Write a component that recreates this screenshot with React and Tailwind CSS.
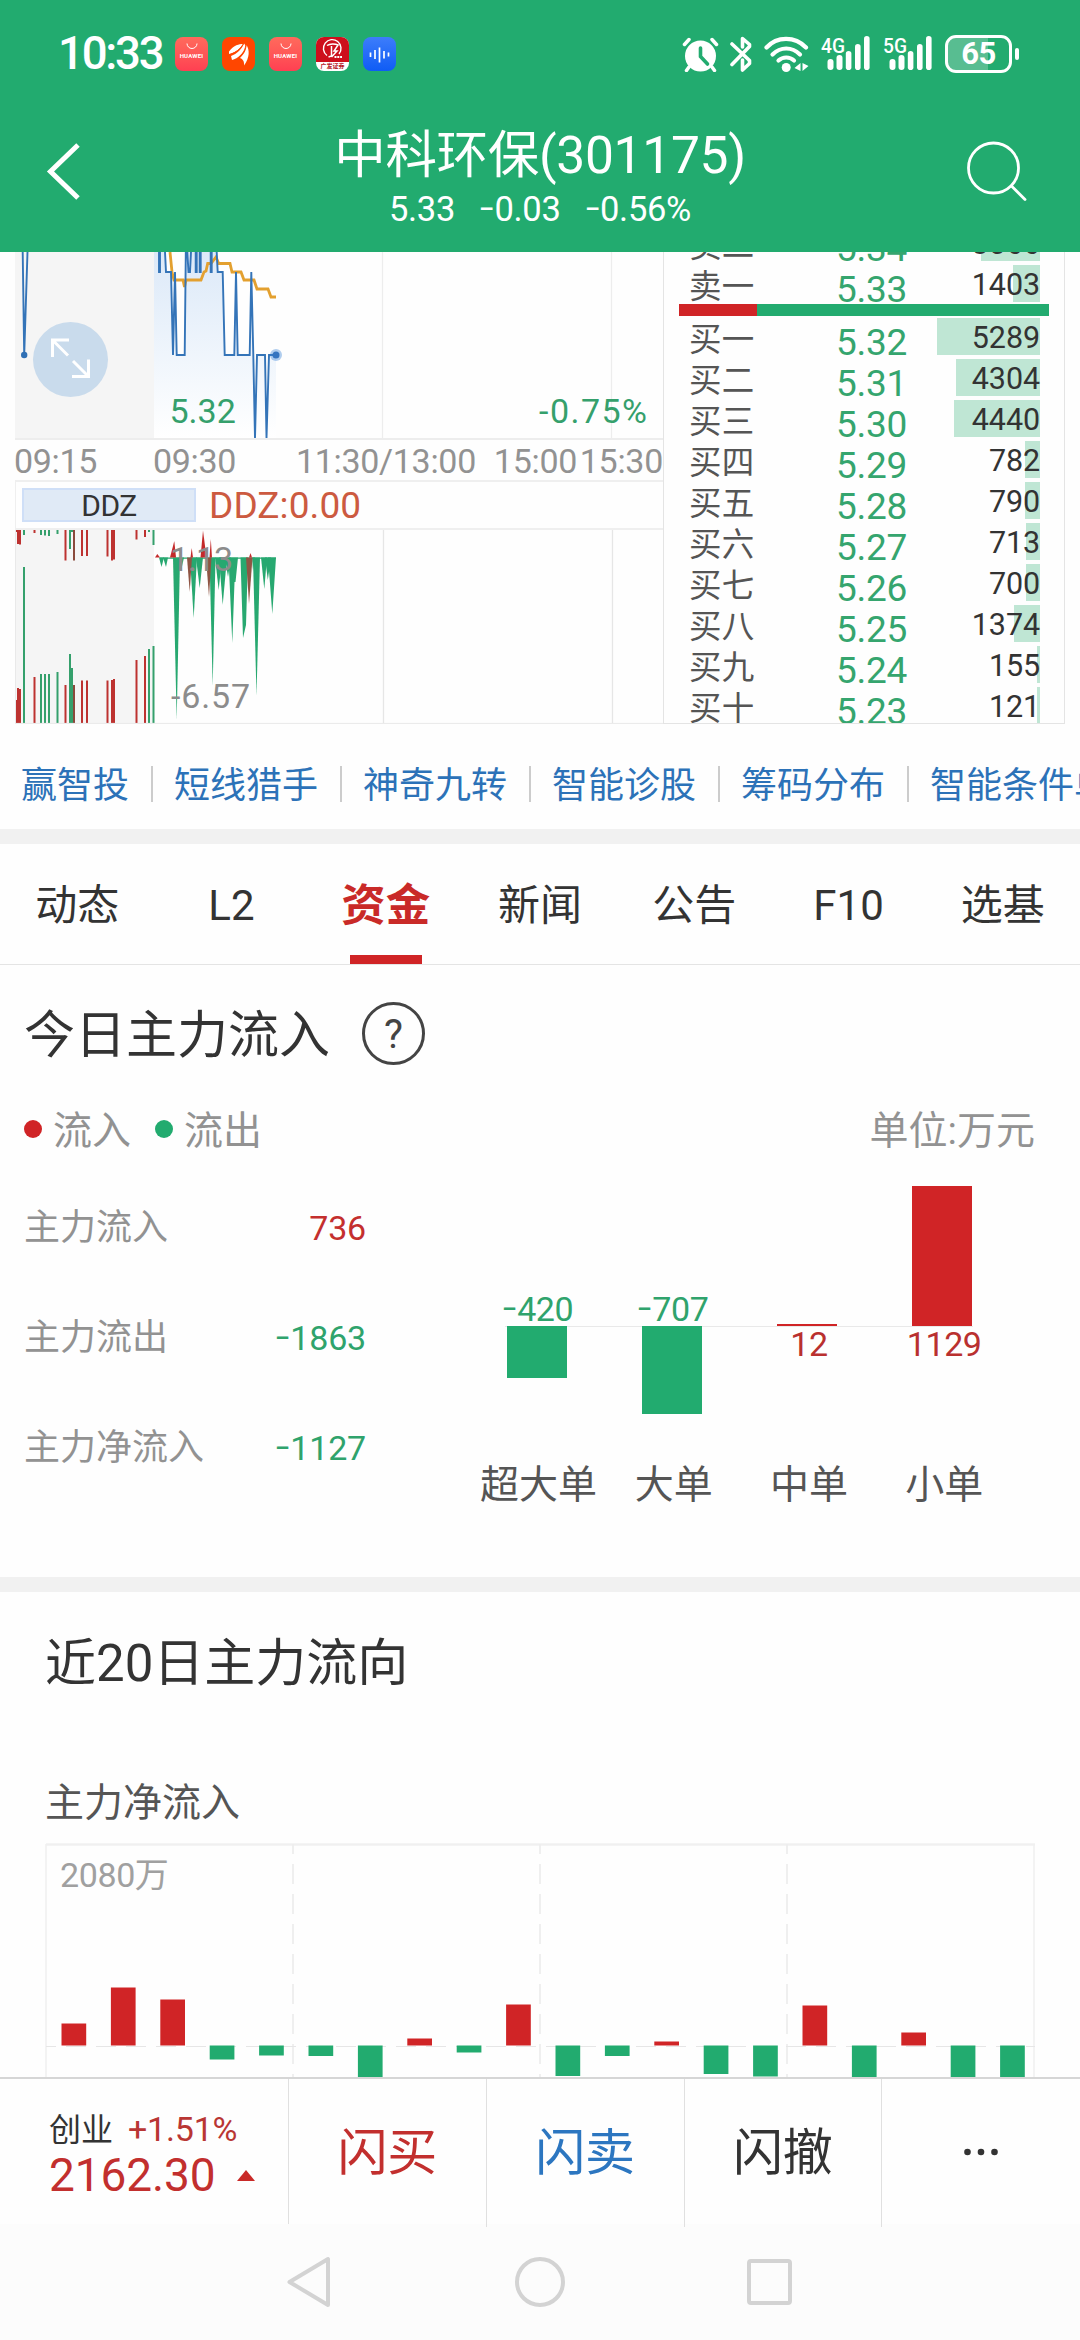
import React from 'react';

const LEVELS = [
  { label: '卖一', price: '5.33', volume: '1403', bar: 27 },
  { label: '买一', price: '5.32', volume: '5289', bar: 103 },
  { label: '买二', price: '5.31', volume: '4304', bar: 84 },
  { label: '买三', price: '5.30', volume: '4440', bar: 86 },
  { label: '买四', price: '5.29', volume: '782', bar: 15 },
  { label: '买五', price: '5.28', volume: '790', bar: 15 },
  { label: '买六', price: '5.27', volume: '713', bar: 14 },
  { label: '买七', price: '5.26', volume: '700', bar: 14 },
  { label: '买八', price: '5.25', volume: '1374', bar: 26 },
  { label: '买九', price: '5.24', volume: '155', bar: 3 },
  { label: '买十', price: '5.23', volume: '121', bar: 3 },
];

const TOOLS = ['赢智投', '短线猎手', '神奇九转', '智能诊股', '筹码分布', '智能条件单'];
const TABS = ['动态', 'L2', '资金', '新闻', '公告', 'F10', '选基'];

const SUMMARY = [
  { label: '主力流入', value: '736', color: 'text-[#c42f2e]' },
  { label: '主力流出', value: '-1863', color: 'text-[#2fa36c]' },
  { label: '主力净流入', value: '-1127', color: 'text-[#2fa36c]' },
];

const ORDERS = [
  { label: '超大单', value: -420, height: 52 },
  { label: '大单', value: -707, height: 88 },
  { label: '中单', value: 12, height: 2 },
  { label: '小单', value: 1129, height: 140 },
];

// bar heights in px, positive grows upwards
const FLOW = [22, 58, 46, -14, -10, -10.5, -40, 7, -7, 41, -30.5, -10.5, 4, -28.5, -31, 40, -40, 13, -40, -40];

// call auction bars: [x, y, color]
const R = '#bd3230';
const G = '#35a06c';
const B = '#8a4a3c';
const AUCTION_TOP = [
  [16, 532, R], [18, 544, R], [20, 544.5, R], [24, 535, G], [34.5, 533, R], [41, 535, G], [45, 535.5, G],
  [49, 536, G], [57.5, 534, G], [65.5, 560.5, R], [72, 532, G], [70, 549, G], [74, 560.5, B], [82, 556, R],
  [87, 556, R], [107.5, 556.5, R], [112, 560.5, R], [114, 559.5, R], [136.5, 539.5, R], [145, 537, R],
  [149, 532, G], [153.5, 545, G],
];
const AUCTION_BOTTOM = [
  [16, 700, R], [18, 688, R], [20, 689, R], [24, 567, G], [34.5, 677, R], [41, 674, G], [45, 674, G],
  [49, 674, G], [57.5, 672, G], [65.5, 685, R], [74, 685, B], [72, 668, G], [70, 654, G], [82, 680.5, R],
  [87, 680.5, R], [107.5, 680.5, R], [112, 680, R], [114, 679, R], [136.5, 660, R], [145, 656, R],
  [149, 649, G], [153.5, 646, G],
];

// spikes around the zero line: [left, right, tip x, tip y]
const SPIKES_GREEN = [
  [159, 164, 161.5, 567], [163, 168, 166, 567], [173, 180, 176.7, 720], [179, 184, 181, 571],
  [190, 197, 193.7, 618], [196, 203, 199.7, 588], [209.5, 215.5, 212.7, 686], [215, 222, 218.7, 590],
  [219, 227, 222.7, 605], [225, 231, 228, 577], [261, 267, 264.3, 589], [265, 271, 267.8, 580],
  [252, 255, 253, 571], [253, 260, 256.5, 696],
];
const SPIKES_RED = [
  [155, 160, 157.3, 554], [170, 176, 174.3, 541], [190.5, 193, 191.7, 548], [200.5, 206.5, 203, 530.5],
  [209.5, 212, 210.8, 539], [249, 252, 250.5, 553],
];
const SPIKES_BROWN = [
  [187, 192, 189.7, 592], [206, 211.5, 209, 597], [246, 252.5, 249, 604],
];

const PRICE_LINE =
  'M159 252V272H160V252M165 252L166 272H171L173 355L175 272L176.7 355H184.7L185.8 252M187.3 252L188.5 272H190L191 252' +
  'M195.7 252V272H196.7V252M199.7 252V272H200.7V252M210.7 252V272H211.7V252M216.7 252L217.7 272H222.7L224.7 355H234.3' +
  'L236 272L237.7 355H249.7L251.3 272L253.3 355L255 438L257 355H265L266.5 438L269 355H276';

function Num({ children }) {
  const text = String(children);
  if (!text.startsWith('-')) return <span>{text}</span>;
  return (
    <span>
      <span className="inline-block w-[0.42em] -translate-y-[0.05em] scale-x-[1.4] origin-left">-</span>
      {text.slice(1)}
    </span>
  );
}

function Signal({ label }) {
  return (
    <svg width="52" height="36" viewBox="0 0 52 36" fill="#fff" className="overflow-visible">
      <text x="1" y="17.500" fontSize="21" fontWeight="500" fontFamily="Roboto, sans-serif" textLength="24" lengthAdjust="spacingAndGlyphs">{label}</text>
      <rect x="7.5" y="24" width="6" height="11" rx="3" />
      <rect x="16.5" y="20" width="6" height="15" rx="3" />
      <rect x="25.8" y="16" width="5.6" height="19" rx="2.8" />
      <rect x="35" y="9" width="5.6" height="26" rx="2.8" />
      <rect x="44" y="1" width="5.6" height="34" rx="2.8" />
    </svg>
  );
}

function HuaweiIcon() {
  return (
    <div className="w-[33px] h-[34px] rounded-[8px] bg-linear-to-b from-[#ff6a5c] to-[#ff3f52] flex flex-col items-center">
      <svg width="12" height="7" viewBox="0 0 12 7" className="mt-[6px]" fill="none" stroke="#fff" strokeWidth="1">
        <path d="M1 0.5A5 5 0 0 0 11 0.5" />
      </svg>
      <span className="mt-[2px] text-[6px] leading-[8px] font-bold text-white tracking-[0.2px]">HUAWEI</span>
    </div>
  );
}

function StatusBar() {
  return (
    <div className="h-[108px] pl-[58px] pr-[61px] flex items-start justify-between text-white">
      <div className="flex items-start">
        <span className="mt-[28px] w-[117px] text-[45.500px] leading-[52px] font-medium tracking-[-2.200px]">10:33</span>
        <div className="mt-[37px] flex gap-[14px]">
          <HuaweiIcon />
          <svg width="33" height="34" viewBox="0 0 33 34">
            <rect width="33" height="34" rx="8" fill="#ff4600" />
            <path d="M7 14.5C12 8 17 7 21 7C19 11 14 15.5 7 17Z" fill="#fff" />
            <path d="M9 19C15 17 20 12 22 6.5L24 9C22 16 16 21.5 10 23Z" fill="#fff" />
            <path d="M18 21C22 17 24.5 13 24.5 8C27.5 13 28 20 22 28.500C22.500 25 21 22 18 21Z" fill="#fff" />
            <path d="M7.500 17.800C14 15.500 18.500 12 21.500 6.800M15 22C20 18.500 23 14 23.900 8" fill="none" stroke="#ff4600" strokeWidth="1" />
          </svg>
          <HuaweiIcon />
          <div className="w-[33px] h-[34px] rounded-[8px] bg-white overflow-hidden flex flex-col items-center">
            <svg width="33" height="25" viewBox="0 0 33 25" className="shrink-0">
              <rect width="33" height="25" fill="#cd0f1c" />
              <path d="M11 18.500A8.800 8.800 0 1 1 23 17" fill="none" stroke="#fff" strokeWidth="1.400" />
              <path d="M11 8.500C14 6.500 19 6.500 22 8L18 14H21L15.500 20M15.500 9V19L12.500 20" fill="none" stroke="#fff" strokeWidth="1.500" />
              <path d="M18.500 20H26" stroke="#fff" strokeWidth="2" strokeDasharray="2 .8" />
            </svg>
            <span className="text-[6px] leading-[8px] font-bold text-[#b5202a] whitespace-nowrap">广发证券</span>
          </div>
          <svg width="33" height="34" viewBox="0 0 33 34">
            <defs>
              <linearGradient id="voice" x1="0" y1="0" x2="0" y2="1">
                <stop offset="0" stopColor="#3d7dfb" />
                <stop offset="1" stopColor="#0f5cf5" />
              </linearGradient>
            </defs>
            <rect width="33" height="34" rx="8" fill="url(#voice)" />
            <path d="M7.500 15.500V20M12 13V22M16.500 10.500V25.500M21 14V21.500M25.500 15.500V19.500" stroke="#fff" strokeWidth="1.700" fill="none" />
          </svg>
        </div>
      </div>

      <div className="mt-[35px] flex items-start">
        <svg width="37" height="37" viewBox="0 0 37 37" className="mr-[11px]">
          <circle cx="18.500" cy="21" r="15.500" fill="#fff" />
          <path d="M7 32L4.500 35.500M30 32L32.500 35.500M2.500 9.500L7 4.500M34.500 9.500L30 4.500" stroke="#fff" strokeWidth="3.500" strokeLinecap="round" />
          <path d="M18.500 13V21.500L25.500 29" fill="none" stroke="#22ab6f" strokeWidth="3.600" strokeLinecap="round" />
        </svg>
        <svg width="22" height="37" viewBox="0 0 22 37" className="mr-[12px]" fill="none" stroke="#fff" strokeWidth="3.600" strokeLinejoin="round" strokeLinecap="round">
          <path d="M2 9L19.500 25.500V28.500L12.500 35V25M12.500 12V3.500L19.500 9.500V11.500L2 29.500" />
        </svg>
        <svg width="45" height="37" viewBox="0 0 45 37" className="mr-[11px]">
          <g fill="none" stroke="#fff" strokeWidth="4.200" strokeLinecap="round">
            <path d="M2.500 12.500C13 1 31 1 42 12.500" />
            <path d="M8.500 19.500C16.500 11.500 28 11.500 36 19.500" />
            <path d="M14.500 25.500C19 21.500 25.500 21.500 30 25.500" />
          </g>
          <circle cx="22.200" cy="32.500" r="4.500" fill="#fff" />
          <path d="M36.500 28V36L30.500 33Z M38.500 28V36L44.500 31Z" fill="#fff" />
        </svg>
        <Signal label="4G" />
        <div className="w-[10px]" />
        <Signal label="5G" />
        <div className="ml-[11px] w-[67px] h-[38px] rounded-[11px] border-[3px] border-white bg-linear-to-r from-[#58bd91] from-66% to-transparent to-66% flex items-center justify-center">
          <span className="text-[31px] leading-[32px] font-bold tracking-[-0.5px]">65</span>
        </div>
        <div className="ml-[3px] mt-[13px] w-[4px] h-[12px] rounded-[2px] bg-white" />
      </div>
    </div>
  );
}

function Header() {
  return (
    <div className="h-[144px] flex justify-between text-white">
      <svg width="120" height="144" viewBox="0 0 120 144" fill="none" stroke="#fff" strokeWidth="5">
        <path d="M78 37L50.500 63.500L78 90" />
      </svg>
      <div className="flex flex-col items-center">
        <h1 className="mt-[17px] text-[51.500px] leading-[62px] tracking-[-0.3px]">中科环保(301175)</h1>
        <div className="mt-[2px] flex gap-[25px] text-[34.500px] leading-[40px] tracking-[-0.3px]">
          <Num>5.33</Num>
          <Num>-0.03</Num>
          <Num>-0.56%</Num>
        </div>
      </div>
      <svg width="120" height="144" viewBox="0 0 120 144" fill="none" stroke="#fff" strokeWidth="2.800" strokeLinecap="round">
        <circle cx="33.500" cy="60" r="25" />
        <path d="M51.500 78L65 91.500" />
      </svg>
    </div>
  );
}

function PriceChart() {
  return (
    <svg width="649" height="188" viewBox="15 252 649 188" className="block">
      <defs>
        <linearGradient id="area" x1="0" y1="0" x2="0" y2="1">
          <stop offset="0" stopColor="#dce9f8" />
          <stop offset="1" stopColor="#fff" />
        </linearGradient>
      </defs>
      <rect x="15" y="252" width="139" height="186" fill="#f5f5f5" />
      <path
        d="M154 438V252H165L166 272H171L173 355L175 272L176.700 355H184.700L185.800 252H216.700L217.700 272H222.700L224.700 355H234.300L236 272L237.700 355H249.700L251.300 272L253.300 355L255 438L257 355H265L266.500 438L269 355H276V438Z"
        fill="url(#area)"
      />
      <path d="M15 439H664" stroke="#ededed" strokeWidth="2" />
      <path d="M382.500 252V438M611.500 252V438" stroke="#ededed" strokeWidth="1.300" />
      <path
        d="M170 252L172 272L174 280H183L184.500 287L186 280H201L204 272L206 271L207.700 263.500H211L216 257L218.700 263.500H230L232 272H241L244 280H254L257 289H268L271 297H276"
        fill="none"
        stroke="#e3a02f"
        strokeWidth="2.800"
      />
      <path d="M22.700 252L24.200 355L27.500 252" fill="none" stroke="#3474b8" strokeWidth="1.900" />
      <circle cx="24.200" cy="355" r="3.200" fill="#2f70b5" />
      <path d={PRICE_LINE} fill="none" stroke="#3474b8" strokeWidth="1.900" />
      <circle cx="276" cy="355" r="6" fill="#3d85d8" opacity="0.400" />
      <circle cx="276" cy="355" r="3.500" fill="#3474c0" />
      <circle cx="70.500" cy="359.500" r="37.500" fill="#c9dbec" />
      <path d="M52.500 357V340H69M53 340.500L68 355.500M73 361L88 376M72 376.500H88.500V359.500" fill="none" stroke="#fff" strokeWidth="3" />
      <g fontSize="34" fill="#35a06c">
        <text x="169.500" y="423">5.32</text>
        <text x="539" y="423" textLength="108">-0.75%</text>
      </g>
    </svg>
  );
}

function spike([x1, x2, tx, ty]) {
  return `${x1},557.5 ${x2},557.5 ${tx},${ty}`;
}

function DdzChart() {
  return (
    <svg width="649" height="196" viewBox="15 528 649 196" className="block">
      <rect x="15" y="530" width="139" height="193" fill="#f5f5f5" />
      {AUCTION_TOP.map(([x, y, c], i) => (
        <path key={i} d={`M${x} 530V${y}`} stroke={c} strokeWidth="2" />
      ))}
      {AUCTION_BOTTOM.map(([x, y, c], i) => (
        <path key={i} d={`M${x} 723V${y}`} stroke={c} strokeWidth="2" />
      ))}
      <path d="M15 529H664" stroke="#efefef" strokeWidth="2" />
      <path d="M15.500 530V723M15 723.400H664" stroke="#e9e9e9" strokeWidth="1" />
      <path d="M383.500 530V723M612.500 530V723" stroke="#e6e6e6" strokeWidth="1.300" />
      <path d="M160 558.200H276" stroke="#27a870" strokeWidth="1.200" />
      {SPIKES_GREEN.map((s, i) => (
        <polygon key={i} points={spike(s)} fill="#27a870" />
      ))}
      <path d="M228.500 557.500H238L235.500 582H234.500L232.300 643ZM240.500 557.500H248L246 625L243 638ZM268 557.500H276L272.300 614Z" fill="#27a870" />
      {SPIKES_BROWN.map((s, i) => (
        <polygon key={i} points={spike(s)} fill="#8f5544" />
      ))}
      {SPIKES_RED.map((s, i) => (
        <polygon key={i} points={spike(s)} fill="#c42a2a" />
      ))}
      <g fontSize="34" fill="#8c8c8c">
        <text x="170" y="571" textLength="63">1.13</text>
        <text x="171" y="708" textLength="79">-6.57</text>
      </g>
    </svg>
  );
}

function Level({ label, price, volume, bar }) {
  return (
    <div className="h-[41px] shrink-0 pl-[25px] pr-[24px] flex">
      <span className="w-[147px] pt-[6px] text-[32.500px] leading-[36px] tracking-[0.3px] text-[#555]">{label}</span>
      <span className="pt-[6px] text-[37px] leading-[41px] tracking-[-0.3px] text-[#35a56e]">{price}</span>
      <div className="ml-auto relative h-[37px] mt-[2px]">
        <div className="absolute right-0 top-0 h-[37px] bg-[#bfe6d4]" style={{ width: bar }} />
        <span className="relative block text-[30.500px] leading-[39px] text-[#333] tracking-[-0.1px]">{volume}</span>
      </div>
    </div>
  );
}

function Quotes() {
  return (
    <div className="h-[472px] pl-[15px] flex overflow-hidden">
      <div className="w-[648px] shrink-0 flex flex-col">
        <PriceChart />
        <div className="h-[40px] flex text-[34px] leading-[42px] text-[#929292] tracking-[-0.300px] -ml-px whitespace-nowrap">
          <span className="w-[139px]">09:15</span>
          <span className="w-[143px]">09:30</span>
          <span className="w-[198px]">11:30/13:00</span>
          <span className="w-[86px]">15:00</span>
          <span>15:30</span>
        </div>
        <div className="h-[48px] border-t-2 border-l border-[#efefef] pl-[6px] pt-[6px] flex">
          <div className="w-[174px] h-[34px] border-2 border-[#cfdff7] bg-[#e0eaf6] text-center text-[30px] leading-[32px] text-[#333] tracking-[-0.500px]">DDZ</div>
          <span className="ml-[13px] text-[37px] leading-[36px] text-[#cc5a40] tracking-[0.100px]">DDZ:0.00</span>
        </div>
        <DdzChart />
      </div>
      <div className="w-[402px] shrink-0 border-x border-b border-[#e4e4e4] flex flex-col overflow-hidden">
        {/* first ask row is scrolled under the header */}
        <div className="h-[11px] shrink-0 overflow-hidden flex flex-col justify-end">
          <Level label="卖二" price="5.34" volume="3066" bar={59} />
        </div>
        <Level {...LEVELS[0]} />
        <div className="h-[12px] shrink-0 ml-[15px] w-[370px] flex">
          <div className="w-[78px] bg-[#d02426]" />
          <div className="flex-1 bg-[#22ab6f]" />
        </div>
        {LEVELS.slice(1).map((level) => (
          <Level key={level.label} {...level} />
        ))}
      </div>
    </div>
  );
}

function Tools() {
  return (
    <div className="h-[105px] pl-[21px] pt-[42px] flex items-start overflow-hidden whitespace-nowrap">
      {TOOLS.map((tool, i) => (
        <React.Fragment key={tool}>
          {i > 0 && <div className="mx-[21.500px] w-[2px] h-[36px] shrink-0 bg-[#ccc]" />}
          <span className="text-[36px] leading-[40px] text-[#2c72b8]">{tool}</span>
        </React.Fragment>
      ))}
    </div>
  );
}

function Tabs() {
  return (
    <div className="h-[121px] grid grid-cols-7 border-b border-[#e4e4e4]">
      {TABS.map((tab) =>
        tab === '资金' ? (
          <div key={tab} className="flex flex-col items-center justify-between">
            <span className="mt-[32px] text-[44.500px] leading-[60px] font-bold text-[#c92a28]">{tab}</span>
            <div className="w-[72px] h-[9px] bg-[#d02426]" />
          </div>
        ) : (
          <div key={tab} className="pt-[32px] text-center text-[42px] leading-[60px] text-[#333]">{tab}</div>
        )
      )}
    </div>
  );
}

function OrderBar({ label, value, height }) {
  const up = value > 0;
  return (
    <div className="w-[135.200px] flex flex-col items-center text-[34px] leading-[40px] tracking-[-0.400px]">
      <div className="h-[140px] flex flex-col items-center justify-end">
        {up ? (
          <div className="w-[60px] bg-[#d02426]" style={{ height }} />
        ) : (
          <span className="pl-[3px] text-[#2fa36c] mb-[-3px]"><Num>{value}</Num></span>
        )}
      </div>
      <div className="h-[131px] flex flex-col items-center">
        {up ? (
          <span className="pl-[4px] text-[#b9302f] -mt-[2px]">{value}</span>
        ) : (
          <div className="w-[60px] bg-[#22ab6f]" style={{ height }} />
        )}
      </div>
      <span className="pl-[4px] text-[39px] leading-[56px] tracking-normal text-[#555] whitespace-nowrap">{label}</span>
    </div>
  );
}

function TodayFlow() {
  return (
    <section className="h-[612px] flex flex-col">
      <div className="mt-[36px] pl-[24px] flex items-center h-[64px]">
        <h2 className="pt-[5px] text-[51px] leading-[64px] text-[#333]">今日主力流入</h2>
        <div className="ml-[32px] w-[63px] h-[63px] rounded-full border-[3px] border-[#444] text-center text-[40px] leading-[59px] text-[#444]">?</div>
      </div>
      <div className="mt-[38px] pl-[24px] pr-[45px] h-[56px] flex items-center text-[39px] leading-[56px] text-[#929292]">
        <div className="w-[18px] h-[18px] -mt-1 rounded-full bg-[#d02426]" />
        <span className="ml-[11px]">流入</span>
        <div className="ml-[24px] w-[18px] h-[18px] -mt-1 rounded-full bg-[#22ab6f]" />
        <span className="ml-[11px]">流出</span>
        <span className="ml-auto">单位:万元</span>
      </div>
      <div className="flex">
        <div className="mt-[14px] w-[469px] pl-[24px] pr-[103px] flex flex-col">
          {SUMMARY.map((row) => (
            <div key={row.label} className="h-[110px] flex items-center justify-between text-[#929292]">
              <span className="text-[36px] leading-[50px]">{row.label}</span>
              <span className={`text-[34px] leading-[50px] tracking-[-0.200px] ${row.color}`}><Num>{row.value}</Num></span>
            </div>
          ))}
        </div>
        <div className="relative pt-[27px] flex">
          <div className="absolute left-[36px] top-[167px] w-[468px] h-px bg-[#e9e9e9]" />
          <div className="relative flex">
            {ORDERS.map((order) => (
              <OrderBar key={order.label} {...order} />
            ))}
          </div>
        </div>
      </div>
    </section>
  );
}

function FlowChart() {
  return (
    <svg width="990" height="234" viewBox="45 1843 990 234" className="block">
      <path d="M46 1844.500H1035" stroke="#f0f0f0" strokeWidth="2.500" />
      <path d="M46 1844V2077M1034 1844V2077" stroke="#f0f0f0" strokeWidth="1.600" />
      <path d="M293 1844V2077M540 1844V2077M787 1844V2077" stroke="#eee" strokeWidth="1.800" strokeDasharray="20 10" strokeDashoffset="10" />
      <path d="M46 2046.500H1035" stroke="#e6e6e6" strokeWidth="1.200" strokeDasharray="20 10" strokeDashoffset="10" />
      {FLOW.map((v, i) => (
        <rect
          key={i}
          x={61.5 + i * 49.4}
          y={v > 0 ? 2045.5 - v : 2045.5}
          width="24.700"
          height={Math.abs(v)}
          fill={v > 0 ? '#d02426' : '#22ab6f'}
        />
      ))}
      <text x="60" y="1887" fontSize="34" fill="#a0a0a0" letterSpacing="-0.400">2080万</text>
    </svg>
  );
}

function RecentFlow() {
  return (
    <section className="h-[485px] pl-[45px] overflow-hidden">
      <h2 className="pt-[39px] text-[51px] leading-[66px] text-[#333]">近20日主力流向</h2>
      <h3 className="mt-[76px] mb-[43px] h-[27px] text-[39px] leading-[60px] text-[#555]">主力净流入</h3>
      <FlowChart />
    </section>
  );
}

function TradeBar() {
  return (
    <div className="h-[147px] border-t-2 border-[#d6d6d6] flex">
      <div className="w-[289px] shrink-0 border-r border-[#e0e0e0] pl-[49px] pt-[28px]">
        <div className="flex items-baseline h-[42px] leading-[44px]">
          <span className="text-[32px] text-[#333]">创业</span>
          <span className="ml-[15px] text-[34px] tracking-[-0.200px] text-[#b93634]">+1.51%</span>
        </div>
        <div className="flex h-[50px] text-[46px] leading-[52px] tracking-[-0.100px] text-[#c22f2e]">
          <span>2162.30</span>
          <svg width="18" height="12" viewBox="0 0 18 12" className="ml-[21px] mt-[21px]" fill="#c92a28">
            <path d="M9 0L18 11H0Z" />
          </svg>
        </div>
      </div>
      <div className="flex-1 grid grid-cols-4 text-center text-[50px] leading-[148px]">
        <div className="border-r border-[#e0e0e0] text-[#c22f2e]">闪买</div>
        <div className="border-r border-[#e0e0e0] text-[#2c76c0]">闪卖</div>
        <div className="border-r border-[#e0e0e0] text-[#333]">闪撤</div>
        <div className="flex items-center justify-center pb-[3px]">
          <svg width="36" height="8" viewBox="0 0 36 8" fill="#333">
            <circle cx="4.500" cy="4" r="3.300" />
            <circle cx="18" cy="4" r="3.300" />
            <circle cx="31.500" cy="4" r="3.300" />
          </svg>
        </div>
      </div>
    </div>
  );
}

function NavBar() {
  return (
    <div className="h-[116px] bg-[#fcfcfc] flex justify-center">
      <svg width="520" height="116" viewBox="280 0 520 116" fill="none" stroke="#d3d3d3" strokeWidth="4" strokeLinejoin="round">
        <path d="M328 35V81L289.500 58Z" />
        <circle cx="540" cy="58" r="23" />
        <rect x="749" y="37" width="41" height="42" rx="2" />
      </svg>
    </div>
  );
}

export default function App() {
  return (
    <div className="w-[1080px] h-[2340px] overflow-hidden bg-[#fefefe] font-[Roboto,'Noto_Sans_CJK_SC',sans-serif]">
      <div className="bg-[#22ab6f]">
        <StatusBar />
        <Header />
      </div>
      <Quotes />
      <Tools />
      <div className="h-[15px] bg-[#f1f1f1]" />
      <Tabs />
      <TodayFlow />
      <div className="h-[15px] bg-[#f1f1f1]" />
      <RecentFlow />
      <TradeBar />
      <NavBar />
    </div>
  );
}
